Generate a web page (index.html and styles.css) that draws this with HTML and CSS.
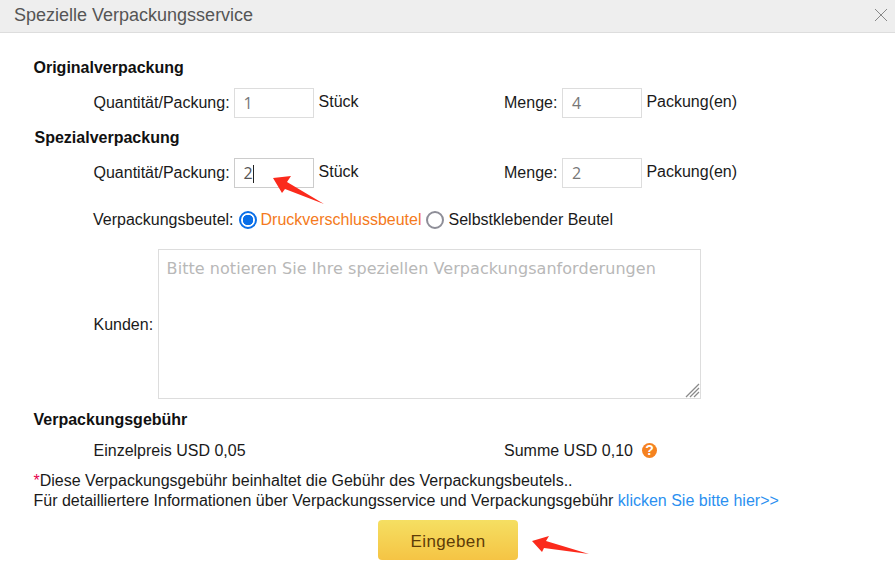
FILE: index.html
```html
<!DOCTYPE html>
<html lang="de">
<head>
<meta charset="utf-8">
<title>Spezielle Verpackungsservice</title>
<link rel="stylesheet" href="styles.css">
</head>
<body>
<div class="dialog">
  <header class="head">
    <h1 class="title">Spezielle Verpackungsservice</h1>
    <svg class="close" width="14" height="14" viewBox="0 0 14 14"><path d="M1 1L13 13M13 1L1 13" stroke="#888" stroke-width="1" fill="none"/></svg>
  </header>
  <main class="body">
    <h2 class="sec sec-first">Originalverpackung</h2>
    <div class="row row-orig">
      <div class="col"><span class="lab">Quantität/Packung:</span><span class="box">1</span><span class="unit">Stück</span></div>
      <div class="col"><span class="lab">Menge:</span><span class="box">4</span><span class="unit">Packung(en)</span></div>
    </div>
    <h2 class="sec sec-spec">Spezialverpackung</h2>
    <div class="row row-spec">
      <div class="col"><span class="lab">Quantität/Packung:</span><span class="box box-active">2<i class="caret"></i></span><span class="unit">Stück</span></div>
      <div class="col"><span class="lab">Menge:</span><span class="box">2</span><span class="unit">Packung(en)</span></div>
    </div>
    <div class="bag">
      <span class="lab">Verpackungsbeutel:</span>
      <span class="radio radio-on"></span><span class="opt-on">Druckverschlussbeutel</span>
      <span class="radio radio-off"></span><span class="opt">Selbstklebender Beutel</span>
    </div>
    <div class="notes">
      <span class="lab lab-notes">Kunden:</span>
      <div class="area">Bitte notieren Sie Ihre speziellen Verpackungsanforderungen
        <svg class="grip" width="15" height="15" viewBox="0 0 15 15"><path d="M1 14L14 1M5 14L14 5M9 14L14 9" stroke="#8a8a8a" stroke-width="1.3" fill="none"/></svg>
      </div>
    </div>
    <h2 class="sec sec-fee">Verpackungsgebühr</h2>
    <div class="row row-fee">
      <div class="col">Einzelpreis USD 0,05</div>
      <div class="col">Summe USD 0,10<span class="help">?</span></div>
    </div>
    <p class="note"><span class="star">*</span>Diese Verpackungsgebühr beinhaltet die Gebühr des Verpackungsbeutels..<br>Für detailliertere Informationen über Verpackungsservice und Verpackungsgebühr <a class="link" href="#">klicken Sie bitte hier&gt;&gt;</a></p>
    <div class="actions"><button class="submit" type="button">Eingeben</button></div>
  </main>
  <svg class="arrow arrow-a" width="56" height="36" viewBox="0 0 56 36"><path d="M0 2L18 0L14 6L51 28L12 13L9 17Z" fill="#fb2a1c"/></svg>
  <svg class="arrow arrow-b" width="60" height="22" viewBox="0 0 60 22"><path d="M0 5L17 0L14 5L57 18L12 12L10 16Z" fill="#fb2a1c"/></svg>
</div>
</body>
</html>
```
FILE: styles.css
```css
* { box-sizing: border-box; }
html, body { margin: 0; padding: 0; }
body { width: 895px; height: 578px; overflow: hidden; background: #fff; font-family: "Liberation Sans", Arial, sans-serif; font-size: 16px; color: #1a1a1a; }
.dialog { position: relative; height: 578px; }
.head { height: 33px; background: #eee; border-bottom: 1px solid #ddd; display: flex; align-items: center; justify-content: space-between; padding: 0 7px 2px 14px; }
.title { margin: 0; font-size: 18px; font-weight: normal; color: #555; }
.close { display: block; }
.body { padding: 0 0 0 33.5px; }
.sec { margin: 0; font-size: 16px; font-weight: bold; line-height: 20px; color: #111; }
.sec-first { padding-top: 25px; }
.sec-spec { margin-top: 10px; padding-left: 1px; }
.sec-fee { margin-top: 11px; }
.row { display: flex; padding-left: 60px; }
.row-orig { margin-top: 10px; }
.row-spec { margin-top: 10px; }
.row-fee { margin-top: 11px; line-height: 20px; }
.col { width: 410.5px; flex: none; display: flex; align-items: center; }
.lab { white-space: nowrap; }
.lab-notes { position: relative; top: 1px; }
.box { width: 80px; height: 30px; border: 1px solid #ddd; margin: 0 5px 0 4px; padding-left: 9px; font-family: "Open Sans", sans-serif; font-size: 16px; line-height: 28px; color: #777; }
.col + .col .box { margin: 0 4.5px 0 4.5px; }
.box-active { border-color: #ccc; color: #555; }
.caret { display: inline-block; width: 1px; height: 18px; background: #222; vertical-align: -4px; }
.unit { position: relative; top: -1px; }
.bag { display: flex; align-items: center; margin: 17px 0 0 59.5px; height: 30px; }
.radio { width: 18px; height: 18px; border-radius: 50%; border: 2px solid #8e8e98; margin: 0 4px 0 5px; flex: none; }
.radio-on { border-color: #0a6fe8; background: radial-gradient(circle, #0a6fe8 0 5px, #fff 5.5px); }
.radio-off { margin: 0 5px 0 4px; }
.opt-on { color: #f47a20; }
.notes { display: flex; align-items: center; margin: 14px 0 0 60px; }
.area { position: relative; width: 543px; height: 150px; margin-left: 4.5px; border: 1px solid #ddd; padding: 9px 8px; font-family: "DejaVu Sans", sans-serif; font-size: 16px; letter-spacing: 0.05px; color: #b8b8b8; }
.grip { position: absolute; right: 0; bottom: 0; }
.note { margin: 10px 0 0; font-size: 16px; line-height: 20px; }
.star { color: #e6004d; }
.link { color: #2b90f0; text-decoration: none; }
.help { position: relative; top: -1px; display: inline-block; width: 15px; height: 15px; margin-left: 9px; border-radius: 50%; background: #f58220; color: #fff; font-size: 14px; font-weight: bold; line-height: 15px; text-align: center; }
.actions { display: flex; padding-left: 344.5px; margin-top: 9px; }
.submit { width: 140px; height: 40px; border: 0; border-radius: 4px; padding: 3px 0 0; background: linear-gradient(#f5df62, #f5c444); color: #5e3c08; font-family: "Liberation Sans", Arial, sans-serif; font-size: 17px; letter-spacing: 0.4px; }
.arrow { position: absolute; }
.arrow-a { left: 273px; top: 176px; }
.arrow-b { left: 532px; top: 536px; }
```
